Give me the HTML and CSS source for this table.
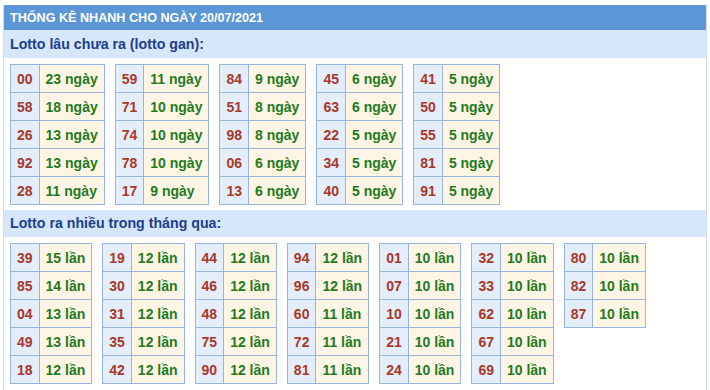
FILE: index.html
```html
<!DOCTYPE html>
<html lang="vi">
<head>
<meta charset="utf-8">
<title>Thống kê nhanh</title>
<link rel="stylesheet" href="styles.css">
</head>
<body>
<div class="box">
  <div class="title">THỐNG KÊ NHANH CHO NGÀY 20/07/2021</div>
  <div class="sub">Lotto lâu chưa ra (lotto gan):</div>
  <div class="grid">
    <table><tr><td class="n">00</td><td class="v">23 ngày</td></tr><tr><td class="n">58</td><td class="v">18 ngày</td></tr><tr><td class="n">26</td><td class="v">13 ngày</td></tr><tr><td class="n">92</td><td class="v">13 ngày</td></tr><tr><td class="n">28</td><td class="v">11 ngày</td></tr></table>
    <table><tr><td class="n">59</td><td class="v">11 ngày</td></tr><tr><td class="n">71</td><td class="v">10 ngày</td></tr><tr><td class="n">74</td><td class="v">10 ngày</td></tr><tr><td class="n">78</td><td class="v">10 ngày</td></tr><tr><td class="n">17</td><td class="v">9 ngày</td></tr></table>
    <table><tr><td class="n">84</td><td class="v">9 ngày</td></tr><tr><td class="n">51</td><td class="v">8 ngày</td></tr><tr><td class="n">98</td><td class="v">8 ngày</td></tr><tr><td class="n">06</td><td class="v">6 ngày</td></tr><tr><td class="n">13</td><td class="v">6 ngày</td></tr></table>
    <table><tr><td class="n">45</td><td class="v">6 ngày</td></tr><tr><td class="n">63</td><td class="v">6 ngày</td></tr><tr><td class="n">22</td><td class="v">5 ngày</td></tr><tr><td class="n">34</td><td class="v">5 ngày</td></tr><tr><td class="n">40</td><td class="v">5 ngày</td></tr></table>
    <table><tr><td class="n">41</td><td class="v">5 ngày</td></tr><tr><td class="n">50</td><td class="v">5 ngày</td></tr><tr><td class="n">55</td><td class="v">5 ngày</td></tr><tr><td class="n">81</td><td class="v">5 ngày</td></tr><tr><td class="n">91</td><td class="v">5 ngày</td></tr></table>
  </div>
  <div class="sub sub2">Lotto ra nhiều trong tháng qua:</div>
  <div class="grid">
    <table><tr><td class="n">39</td><td class="v">15 lần</td></tr><tr><td class="n">85</td><td class="v">14 lần</td></tr><tr><td class="n">04</td><td class="v">13 lần</td></tr><tr><td class="n">49</td><td class="v">13 lần</td></tr><tr><td class="n">18</td><td class="v">12 lần</td></tr></table>
    <table><tr><td class="n">19</td><td class="v">12 lần</td></tr><tr><td class="n">30</td><td class="v">12 lần</td></tr><tr><td class="n">31</td><td class="v">12 lần</td></tr><tr><td class="n">35</td><td class="v">12 lần</td></tr><tr><td class="n">42</td><td class="v">12 lần</td></tr></table>
    <table><tr><td class="n">44</td><td class="v">12 lần</td></tr><tr><td class="n">46</td><td class="v">12 lần</td></tr><tr><td class="n">48</td><td class="v">12 lần</td></tr><tr><td class="n">75</td><td class="v">12 lần</td></tr><tr><td class="n">90</td><td class="v">12 lần</td></tr></table>
    <table><tr><td class="n">94</td><td class="v">12 lần</td></tr><tr><td class="n">96</td><td class="v">12 lần</td></tr><tr><td class="n">60</td><td class="v">11 lần</td></tr><tr><td class="n">72</td><td class="v">11 lần</td></tr><tr><td class="n">81</td><td class="v">11 lần</td></tr></table>
    <table><tr><td class="n">01</td><td class="v">10 lần</td></tr><tr><td class="n">07</td><td class="v">10 lần</td></tr><tr><td class="n">10</td><td class="v">10 lần</td></tr><tr><td class="n">21</td><td class="v">10 lần</td></tr><tr><td class="n">24</td><td class="v">10 lần</td></tr></table>
    <table><tr><td class="n">32</td><td class="v">10 lần</td></tr><tr><td class="n">33</td><td class="v">10 lần</td></tr><tr><td class="n">62</td><td class="v">10 lần</td></tr><tr><td class="n">67</td><td class="v">10 lần</td></tr><tr><td class="n">69</td><td class="v">10 lần</td></tr></table>
    <table><tr><td class="n">80</td><td class="v">10 lần</td></tr><tr><td class="n">82</td><td class="v">10 lần</td></tr><tr><td class="n">87</td><td class="v">10 lần</td></tr></table>
  </div>
</div>
</body>
</html>
```

FILE: styles.css
```css
html, body {
  margin: 0;
  padding: 0;
  background: #ffffff;
}
body {
  font-family: "Liberation Sans", Arial, sans-serif;
}
.box {
  margin: 5px 0 0 3px;
  width: 702px;
  border-left: 1px solid #d5dbe3;
  border-right: 1px solid #d5dbe3;
  padding-bottom: 4px;
}
.title {
  background: #5b96d6;
  border-top: 1px solid #6b9dd3;
  color: #ffffff;
  font-weight: bold;
  font-size: 12.6px;
  height: 24px;
  line-height: 25px;
  padding-left: 6px;
  white-space: nowrap;
}
.sub {
  background: #d6e7fb;
  color: #1f3d8e;
  font-weight: bold;
  font-size: 14.2px;
  height: 28px;
  line-height: 28px;
  padding-left: 6px;
}
.sub2 {
  height: 27px;
  line-height: 27px;
}
.grid {
  display: flex;
  align-items: flex-start;
  gap: 10px;
  padding: 6px 0 5px 6px;
}
table {
  border-collapse: collapse;
}
td {
  border: 1px solid #98b4e0;
  height: 27px;
  padding: 0 6px;
  font-size: 14px;
  font-weight: bold;
  white-space: nowrap;
}
td.n {
  background: #e4eefb;
  color: #a8382a;
  text-align: center;
}
td.v {
  background: #fff5e5;
  color: #1e7b1e;
  text-align: left;
}
```
